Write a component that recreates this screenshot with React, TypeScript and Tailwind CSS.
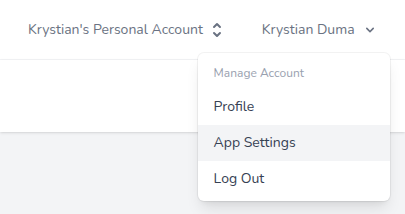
import React from 'react'

const font = { fontFamily: 'Nunito, Lato, "Noto Sans", sans-serif' }

function SelectorIcon() {
  return (
    <svg viewBox="0 0 20 20" fill="currentColor" className="w-5 h-5">
      <path
        fillRule="evenodd"
        d="M10 3a1 1 0 01.707.293l3 3a1 1 0 01-1.414 1.414L10 5.414 7.707 7.707a1 1 0 01-1.414-1.414l3-3A1 1 0 0110 3zm-3.707 9.293a1 1 0 011.414 0L10 14.586l2.293-2.293a1 1 0 011.414 1.414l-3 3a1 1 0 01-1.414 0l-3-3a1 1 0 010-1.414z"
        clipRule="evenodd"
      />
    </svg>
  )
}

function ChevronDownIcon() {
  return (
    <svg viewBox="0 0 20 20" fill="currentColor" className="w-4 h-4">
      <path
        fillRule="evenodd"
        d="M5.293 7.293a1 1 0 011.414 0L10 10.586l3.293-3.293a1 1 0 111.414 1.414l-4 4a1 1 0 01-1.414 0l-4-4a1 1 0 010-1.414z"
        clipRule="evenodd"
      />
    </svg>
  )
}

export default function App() {
  return (
    <div className="min-h-screen bg-gray-100" style={font}>
      {/* Top nav */}
      <nav className="bg-white border-b border-gray-100 h-[60px] flex items-center pl-[28px] text-sm text-gray-500">
        <button className="flex items-center">
          <span>Krystian's Personal Account</span>
          <span className="ml-[4px] text-gray-500">
            <SelectorIcon />
          </span>
        </button>

        <div className="relative ml-[35px] pr-[12px]">
          <button className="flex items-center">
            <span>Krystian Duma</span>
            <span className="ml-[7px]">
              <ChevronDownIcon />
            </span>
          </button>

          {/* Dropdown */}
          <div className="absolute right-0 top-[33px] w-48 z-50 rounded-md bg-white py-1 shadow-lg ring-1 ring-black/5">
            <div className="block px-4 py-2 text-xs text-gray-400">Manage Account</div>
            <a className="block px-4 py-2 text-sm leading-5 text-gray-700">Profile</a>
            <a className="block px-4 py-2 text-sm leading-5 text-gray-700 bg-gray-100">App Settings</a>
            <a className="block px-4 py-2 text-sm leading-5 text-gray-700">Log Out</a>
          </div>
        </div>
      </nav>

      {/* Page header */}
      <header className="bg-white shadow h-[72px]" />
    </div>
  )
}
